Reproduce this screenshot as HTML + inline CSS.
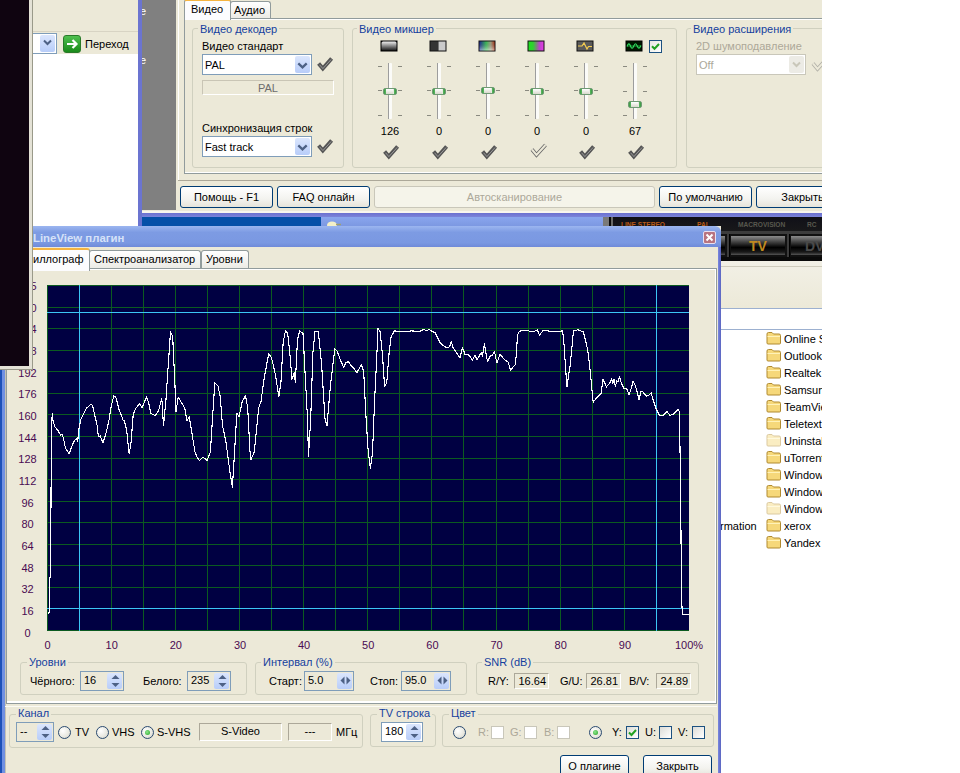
<!DOCTYPE html><html><head><meta charset="utf-8"><style>
*{margin:0;padding:0;box-sizing:border-box}
html,body{width:960px;height:773px;overflow:hidden;background:#fff}
body{position:relative;font-family:"Liberation Sans",sans-serif;font-size:11px;color:#000}
.a{position:absolute}
.t{position:absolute;white-space:nowrap;line-height:13px;font-size:11px}
.gb{position:absolute;border:1px solid #d0d0bf;border-radius:3px}
.gl{position:absolute;white-space:nowrap;line-height:13px;color:#153f9e;background:#ece9d8;padding:0 2px}
.btn{position:absolute;border:1px solid #003c74;border-radius:3px;background:linear-gradient(#fff,#f3f3ef 60%,#e6e4da);text-align:center;line-height:21px;white-space:nowrap}
.cmb{position:absolute;border:1px solid #7f9db9;background:#fff}
.dd{position:absolute;top:1px;right:1px;bottom:1px;width:15px;border-radius:2px;background:linear-gradient(#dbe6fd,#b8cdf9)}

.ylab{position:absolute;width:30px;text-align:center;line-height:13px;color:#4a0a52;font-size:11px}
.xlab{position:absolute;width:40px;text-align:center;line-height:13px;color:#4a0a52;font-size:11px}
.fold{position:absolute;width:16px;height:13px}
</style></head><body>
<div class="a" style="left:33px;top:0;width:105px;height:31px;background:#ece9d8"></div>
<div class="a" style="left:33px;top:31px;width:105px;height:1px;background:#d8d4c4"></div>
<div class="a" style="left:33px;top:32px;width:105px;height:22px;background:#ece9d8"></div>
<div class="a" style="left:33px;top:54px;width:105px;height:172px;background:#fff"></div>
<div class="a" style="left:33px;top:33px;width:24px;height:21px;border:1px solid #7f9db9;border-left:none;background:#fff"></div>
<div class="a" style="left:40px;top:35px;width:15px;height:17px;border-radius:2px;background:linear-gradient(#dbe6fd,#b8cdf9)"></div>
<svg class="a" style="left:43px;top:39px" width="9" height="7"><path d="M1 1.5 L4.5 5 L8 1.5" stroke="#4d6185" stroke-width="2" fill="none"/></svg>
<div class="a" style="left:63px;top:35px;width:18px;height:18px;border-radius:3px;background:linear-gradient(#4fc04f,#1a8a1a);border:1px solid #2a7a2a"></div>
<svg class="a" style="left:65px;top:37px" width="14" height="14"><path d="M2 7 H11 M7.5 3 L11.5 7 L7.5 11" stroke="#fff" stroke-width="2.2" fill="none"/></svg>
<div class="t" style="left:85px;top:38px">Переход</div>
<div class="a" style="left:0;top:0;width:822px;height:217px;overflow:hidden">
<div class="a" style="left:138px;top:0;width:4px;height:226px;background:#6b74d0"></div>
<div class="a" style="left:142px;top:0;width:34px;height:210px;background:#808080"></div>
<div class="a" style="left:142px;top:0;width:20px;height:80px;overflow:hidden"><div class="t" style="left:-2px;top:5px;color:#fff">e</div><div class="t" style="left:-2px;top:54px;color:#fff">e</div></div>
<div class="a" style="left:176px;top:0;width:646px;height:213px;background:#ece9d8"></div>
<div class="a" style="left:142px;top:210px;width:34px;height:3px;background:#ece9d8"></div>
<div class="a" style="left:142px;top:211px;width:680px;height:2px;background:#f8f6ee"></div>
<div class="a" style="left:178px;top:0;width:1px;height:180px;background:#fff"></div>
<div class="a" style="left:178px;top:180px;width:644px;height:1px;background:#aca899"></div>
<div class="a" style="left:142px;top:213px;width:680px;height:4px;background:linear-gradient(#6b70d0,#7b84da)"></div>
<div class="a" style="left:184px;top:18px;width:638px;height:156px;border:1px solid #919b9c;border-right:none;background:#ece9d8"></div>
<div class="a" style="left:185px;top:19px;width:637px;height:1px;background:#fff"></div>
<div class="a" style="left:185px;top:172px;width:637px;height:1px;background:#fff"></div>
<div class="a" style="left:230px;top:1px;width:41px;height:17px;border:1px solid #919b9c;border-bottom:none;border-radius:3px 3px 0 0;background:linear-gradient(#fff,#ecebe5)"></div>
<div class="t" style="left:234px;top:4px">Аудио</div>
<div class="a" style="left:184px;top:-1px;width:47px;height:21px;border:1px solid #919b9c;border-bottom:none;border-radius:3px 3px 0 0;background:#fcfcfe;border-top:2px solid #f5b441"></div>
<div class="t" style="left:191px;top:3px">Видео</div>
<div class="gb" style="left:192px;top:28px;width:152px;height:140px"></div>
<div class="gl" style="left:198px;top:23px">Видео декодер</div>
<div class="t" style="left:202px;top:40px">Видео стандарт</div>
<div class="cmb" style="left:202px;top:54px;width:110px;height:21px"><div class="t" style="left:2px;top:4px">PAL</div><div class="dd"><svg class="a" style="left:2px;top:6px" width="11" height="7"><path d="M1.3 1.3 L5.5 5.3 L9.7 1.3" stroke="#4d6185" stroke-width="2.3" fill="none"/></svg></div></div>
<div class="a" style="left:202px;top:80px;width:132px;height:15px;border:1px solid #c9c5b5;border-right-color:#fff;border-bottom-color:#fff;text-align:center;color:#6d6d6d;line-height:13px;padding-top:1px">PAL</div>
<div class="t" style="left:202px;top:122px">Синхронизация строк</div>
<div class="cmb" style="left:202px;top:136px;width:110px;height:21px"><div class="t" style="left:2px;top:4px">Fast track</div><div class="dd"><svg class="a" style="left:2px;top:6px" width="11" height="7"><path d="M1.3 1.3 L5.5 5.3 L9.7 1.3" stroke="#4d6185" stroke-width="2.3" fill="none"/></svg></div></div>
<div class="gb" style="left:352px;top:28px;width:325px;height:140px"></div>
<div class="gl" style="left:357px;top:23px">Видео микшер</div>
<svg class="a" style="left:0;top:0" width="1" height="1"><defs><linearGradient id="gb" x1="0" y1="0" x2="0" y2="1"><stop offset="0" stop-color="#f0f0f0"/><stop offset="1" stop-color="#1a1a1a"/></linearGradient><linearGradient id="gh" x1="0" y1="0" x2="1" y2="0"><stop offset="0" stop-color="#2030a0"/><stop offset="0.45" stop-color="#40d060"/><stop offset="0.75" stop-color="#b0b090"/><stop offset="1" stop-color="#c04020"/></linearGradient><linearGradient id="gw" x1="0" y1="0" x2="0" y2="1"><stop offset="0" stop-color="#000" stop-opacity="0.1"/><stop offset="1" stop-color="#fff" stop-opacity="0.5"/></linearGradient><linearGradient id="gs" x1="0" y1="0" x2="1" y2="0"><stop offset="0" stop-color="#20e020"/><stop offset="0.3" stop-color="#30d030"/><stop offset="0.55" stop-color="#808080"/><stop offset="0.75" stop-color="#c040d0"/><stop offset="1" stop-color="#e040e0"/></linearGradient></defs></svg>
<svg class="a" style="left:380px;top:40px" width="18" height="12"><rect x="0.5" y="0.5" width="17" height="11" fill="#000"/><rect x="1.5" y="1.5" width="15" height="9" rx="1.5" fill="url(#gb)"/></svg>
<div class="a" style="left:388px;top:63px;width:1px;height:56px;background:#9d9d9d"></div>
<div class="a" style="left:389px;top:63px;width:3px;height:56px;background:#fbfbf8;border-radius:1px"></div>
<div class="a" style="left:378px;top:66px;width:4px;height:1px;background:#8a8a80"></div>
<div class="a" style="left:398px;top:66px;width:4px;height:1px;background:#8a8a80"></div>
<div class="a" style="left:378px;top:90px;width:4px;height:1px;background:#8a8a80"></div>
<div class="a" style="left:398px;top:90px;width:4px;height:1px;background:#8a8a80"></div>
<div class="a" style="left:378px;top:115px;width:4px;height:1px;background:#8a8a80"></div>
<div class="a" style="left:398px;top:115px;width:4px;height:1px;background:#8a8a80"></div>
<div class="a" style="left:383px;top:88px;width:14px;height:7px;border-radius:2px;border:1px solid #6f9a74;background:linear-gradient(90deg,#3a9a40 0,#5cb862 2px,#f4f4ee 3px,#e8e8e0 10px,#5cb862 10px,#3a9a40 12px)"></div>
<div class="a" style="left:386px;top:89px;width:7px;height:5px;background:linear-gradient(#fff,#d8d8cc)"></div>
<div class="t" style="left:370px;top:125px;width:40px;text-align:center">126</div>
<svg class="a" style="left:382px;top:142px" width="20" height="18"><path d="M2.6 9.6 L6.8 14.6 L15.6 4.4" stroke="#555" stroke-width="3.9" fill="none"/><path d="M3.6 10.8 L6.9 14.6 L15.2 5.4" stroke="#a8a8a8" stroke-width="0.8" fill="none"/></svg>
<svg class="a" style="left:429px;top:40px" width="18" height="12"><rect x="0.5" y="0.5" width="17" height="11" fill="#111"/><rect x="1.5" y="1.5" width="8" height="9" fill="#343434"/><rect x="9.5" y="1.5" width="7" height="9" fill="#cacaca"/></svg>
<div class="a" style="left:437px;top:63px;width:1px;height:56px;background:#9d9d9d"></div>
<div class="a" style="left:438px;top:63px;width:3px;height:56px;background:#fbfbf8;border-radius:1px"></div>
<div class="a" style="left:427px;top:66px;width:4px;height:1px;background:#8a8a80"></div>
<div class="a" style="left:447px;top:66px;width:4px;height:1px;background:#8a8a80"></div>
<div class="a" style="left:427px;top:90px;width:4px;height:1px;background:#8a8a80"></div>
<div class="a" style="left:447px;top:90px;width:4px;height:1px;background:#8a8a80"></div>
<div class="a" style="left:427px;top:115px;width:4px;height:1px;background:#8a8a80"></div>
<div class="a" style="left:447px;top:115px;width:4px;height:1px;background:#8a8a80"></div>
<div class="a" style="left:432px;top:88px;width:14px;height:7px;border-radius:2px;border:1px solid #6f9a74;background:linear-gradient(90deg,#3a9a40 0,#5cb862 2px,#f4f4ee 3px,#e8e8e0 10px,#5cb862 10px,#3a9a40 12px)"></div>
<div class="a" style="left:435px;top:89px;width:7px;height:5px;background:linear-gradient(#fff,#d8d8cc)"></div>
<div class="t" style="left:419px;top:125px;width:40px;text-align:center">0</div>
<svg class="a" style="left:431px;top:142px" width="20" height="18"><path d="M2.6 9.6 L6.8 14.6 L15.6 4.4" stroke="#555" stroke-width="3.9" fill="none"/><path d="M3.6 10.8 L6.9 14.6 L15.2 5.4" stroke="#a8a8a8" stroke-width="0.8" fill="none"/></svg>
<svg class="a" style="left:478px;top:40px" width="18" height="12"><rect x="0.5" y="0.5" width="17" height="11" fill="#111"/><rect x="1.5" y="1.5" width="15" height="9" fill="url(#gh)"/><rect x="1.5" y="1.5" width="15" height="9" fill="url(#gw)"/></svg>
<div class="a" style="left:486px;top:63px;width:1px;height:56px;background:#9d9d9d"></div>
<div class="a" style="left:487px;top:63px;width:3px;height:56px;background:#fbfbf8;border-radius:1px"></div>
<div class="a" style="left:476px;top:66px;width:4px;height:1px;background:#8a8a80"></div>
<div class="a" style="left:496px;top:66px;width:4px;height:1px;background:#8a8a80"></div>
<div class="a" style="left:476px;top:90px;width:4px;height:1px;background:#8a8a80"></div>
<div class="a" style="left:496px;top:90px;width:4px;height:1px;background:#8a8a80"></div>
<div class="a" style="left:476px;top:115px;width:4px;height:1px;background:#8a8a80"></div>
<div class="a" style="left:496px;top:115px;width:4px;height:1px;background:#8a8a80"></div>
<div class="a" style="left:481px;top:87px;width:14px;height:7px;border-radius:2px;border:1px solid #6f9a74;background:linear-gradient(90deg,#3a9a40 0,#5cb862 2px,#f4f4ee 3px,#e8e8e0 10px,#5cb862 10px,#3a9a40 12px)"></div>
<div class="a" style="left:484px;top:88px;width:7px;height:5px;background:linear-gradient(#fff,#d8d8cc)"></div>
<div class="t" style="left:468px;top:125px;width:40px;text-align:center">0</div>
<svg class="a" style="left:480px;top:142px" width="20" height="18"><path d="M2.6 9.6 L6.8 14.6 L15.6 4.4" stroke="#555" stroke-width="3.9" fill="none"/><path d="M3.6 10.8 L6.9 14.6 L15.2 5.4" stroke="#a8a8a8" stroke-width="0.8" fill="none"/></svg>
<svg class="a" style="left:527px;top:40px" width="18" height="12"><rect x="0.5" y="0.5" width="17" height="11" fill="#111"/><rect x="1.5" y="1.5" width="15" height="9" fill="url(#gs)"/></svg>
<div class="a" style="left:535px;top:63px;width:1px;height:56px;background:#9d9d9d"></div>
<div class="a" style="left:536px;top:63px;width:3px;height:56px;background:#fbfbf8;border-radius:1px"></div>
<div class="a" style="left:525px;top:66px;width:4px;height:1px;background:#8a8a80"></div>
<div class="a" style="left:545px;top:66px;width:4px;height:1px;background:#8a8a80"></div>
<div class="a" style="left:525px;top:90px;width:4px;height:1px;background:#8a8a80"></div>
<div class="a" style="left:545px;top:90px;width:4px;height:1px;background:#8a8a80"></div>
<div class="a" style="left:525px;top:115px;width:4px;height:1px;background:#8a8a80"></div>
<div class="a" style="left:545px;top:115px;width:4px;height:1px;background:#8a8a80"></div>
<div class="a" style="left:530px;top:88px;width:14px;height:7px;border-radius:2px;border:1px solid #6f9a74;background:linear-gradient(90deg,#3a9a40 0,#5cb862 2px,#f4f4ee 3px,#e8e8e0 10px,#5cb862 10px,#3a9a40 12px)"></div>
<div class="a" style="left:533px;top:89px;width:7px;height:5px;background:linear-gradient(#fff,#d8d8cc)"></div>
<div class="t" style="left:517px;top:125px;width:40px;text-align:center">0</div>
<svg class="a" style="left:529px;top:142px" width="20" height="18"><path d="M3 7.5 L7.5 13 L16.5 3" stroke="#666" stroke-width="3.6" fill="none"/><path d="M3 7.5 L7.5 13 L16.5 3" stroke="#ece9d8" stroke-width="2" fill="none"/></svg>
<svg class="a" style="left:576px;top:40px" width="18" height="12"><rect x="0.5" y="0.5" width="17" height="11" fill="#111"/><rect x="1.5" y="1.5" width="15" height="9" fill="#5a5a5a"/><path d="M2 6 H6 L8 3 L11 9 L12.5 6.5 H16" stroke="#f4cc50" stroke-width="1.2" fill="none"/></svg>
<div class="a" style="left:584px;top:63px;width:1px;height:56px;background:#9d9d9d"></div>
<div class="a" style="left:585px;top:63px;width:3px;height:56px;background:#fbfbf8;border-radius:1px"></div>
<div class="a" style="left:574px;top:66px;width:4px;height:1px;background:#8a8a80"></div>
<div class="a" style="left:594px;top:66px;width:4px;height:1px;background:#8a8a80"></div>
<div class="a" style="left:574px;top:90px;width:4px;height:1px;background:#8a8a80"></div>
<div class="a" style="left:594px;top:90px;width:4px;height:1px;background:#8a8a80"></div>
<div class="a" style="left:574px;top:115px;width:4px;height:1px;background:#8a8a80"></div>
<div class="a" style="left:594px;top:115px;width:4px;height:1px;background:#8a8a80"></div>
<div class="a" style="left:579px;top:88px;width:14px;height:7px;border-radius:2px;border:1px solid #6f9a74;background:linear-gradient(90deg,#3a9a40 0,#5cb862 2px,#f4f4ee 3px,#e8e8e0 10px,#5cb862 10px,#3a9a40 12px)"></div>
<div class="a" style="left:582px;top:89px;width:7px;height:5px;background:linear-gradient(#fff,#d8d8cc)"></div>
<div class="t" style="left:566px;top:125px;width:40px;text-align:center">0</div>
<svg class="a" style="left:578px;top:142px" width="20" height="18"><path d="M2.6 9.6 L6.8 14.6 L15.6 4.4" stroke="#555" stroke-width="3.9" fill="none"/><path d="M3.6 10.8 L6.9 14.6 L15.2 5.4" stroke="#a8a8a8" stroke-width="0.8" fill="none"/></svg>
<svg class="a" style="left:625px;top:40px" width="18" height="12"><rect x="0.5" y="0.5" width="17" height="11" fill="#000"/><rect x="1.5" y="1.5" width="15" height="9" fill="#001800"/><path d="M2 6 H16" stroke="#20a040" stroke-width="0.9"/><path d="M2 6.5 Q3.8 1.5 5.5 6 Q7 10.5 8.8 6 Q10.5 1.5 12.2 6 Q13.8 10.5 16 5.5" stroke="#30e060" stroke-width="1.1" fill="none"/></svg>
<div class="a" style="left:633px;top:63px;width:1px;height:56px;background:#9d9d9d"></div>
<div class="a" style="left:634px;top:63px;width:3px;height:56px;background:#fbfbf8;border-radius:1px"></div>
<div class="a" style="left:623px;top:66px;width:4px;height:1px;background:#8a8a80"></div>
<div class="a" style="left:643px;top:66px;width:4px;height:1px;background:#8a8a80"></div>
<div class="a" style="left:623px;top:91px;width:4px;height:1px;background:#8a8a80"></div>
<div class="a" style="left:643px;top:91px;width:4px;height:1px;background:#8a8a80"></div>
<div class="a" style="left:623px;top:115px;width:4px;height:1px;background:#8a8a80"></div>
<div class="a" style="left:643px;top:115px;width:4px;height:1px;background:#8a8a80"></div>
<div class="a" style="left:628px;top:101px;width:14px;height:7px;border-radius:2px;border:1px solid #6f9a74;background:linear-gradient(90deg,#3a9a40 0,#5cb862 2px,#f4f4ee 3px,#e8e8e0 10px,#5cb862 10px,#3a9a40 12px)"></div>
<div class="a" style="left:631px;top:102px;width:7px;height:5px;background:linear-gradient(#fff,#d8d8cc)"></div>
<div class="t" style="left:615px;top:125px;width:40px;text-align:center">67</div>
<svg class="a" style="left:627px;top:142px" width="20" height="18"><path d="M2.6 9.6 L6.8 14.6 L15.6 4.4" stroke="#555" stroke-width="3.9" fill="none"/><path d="M3.6 10.8 L6.9 14.6 L15.2 5.4" stroke="#a8a8a8" stroke-width="0.8" fill="none"/></svg>
<div class="a" style="left:649px;top:40px;width:13px;height:13px;border:1px solid #1c5180;background:linear-gradient(135deg,#e6e6e0,#fff)"></div>
<svg class="a" style="left:651px;top:42px" width="9" height="9"><path d="M1 4.2 L3.5 6.8 L8 2" stroke="#21a121" stroke-width="2" fill="none"/></svg>
<svg class="a" style="left:316px;top:54px" width="20" height="18"><path d="M2.6 9.6 L6.8 14.6 L15.6 4.4" stroke="#555" stroke-width="3.9" fill="none"/><path d="M3.6 10.8 L6.9 14.6 L15.2 5.4" stroke="#a8a8a8" stroke-width="0.8" fill="none"/></svg>
<svg class="a" style="left:316px;top:136px" width="20" height="18"><path d="M2.6 9.6 L6.8 14.6 L15.6 4.4" stroke="#555" stroke-width="3.9" fill="none"/><path d="M3.6 10.8 L6.9 14.6 L15.2 5.4" stroke="#a8a8a8" stroke-width="0.8" fill="none"/></svg>
<svg class="a" style="left:810px;top:56px" width="20" height="18" opacity="0.5"><path d="M3 7.5 L7.5 13 L16.5 3" stroke="#777" stroke-width="3.6" fill="none"/><path d="M3 7.5 L7.5 13 L16.5 3" stroke="#ece9d8" stroke-width="2" fill="none"/></svg>
<div class="gb" style="left:686px;top:28px;width:150px;height:140px"></div>
<div class="gl" style="left:691px;top:23px">Видео расширения</div>
<div class="t" style="left:696px;top:40px;color:#aca899">2D шумоподавление</div>
<div class="a" style="left:696px;top:54px;width:110px;height:21px;border:1px solid #c9c7ba;background:#fff"><div class="t" style="left:2px;top:4px;color:#aca899">Off</div><div class="a" style="top:1px;right:1px;bottom:1px;width:15px;background:#ecebe5;border-radius:2px"></div><svg class="a" style="right:4px;top:6px" width="9" height="7"><path d="M1 1.5 L4.5 5 L8 1.5" stroke="#c9c7ba" stroke-width="2" fill="none"/></svg></div>
<div class="btn" style="left:180px;top:186px;width:93px;height:22px">Помощь - F1</div>
<div class="btn" style="left:277px;top:186px;width:93px;height:22px">FAQ онлайн</div>
<div class="btn" style="left:374px;top:186px;width:281px;height:22px;border-color:#c9c7ba;background:#f5f4ea;color:#aca899">Автосканирование</div>
<div class="btn" style="left:659px;top:186px;width:93px;height:22px">По умолчанию</div>
<div class="btn" style="left:756px;top:186px;width:93px;height:22px">Закрыть</div>
</div>
<div class="a" style="left:138px;top:0;width:4px;height:226px;background:#6b74d0"></div>
<div class="a" style="left:142px;top:217px;width:179px;height:9px;background:#0650a8"></div>
<div class="a" style="left:321px;top:217px;width:282px;height:9px;background:linear-gradient(#8aa6ee,#7c98e2)"></div>
<svg class="a" style="left:326px;top:220px" width="16" height="6"><ellipse cx="6" cy="5" rx="5" ry="3.5" fill="#f4f0c8"/><path d="M10 4.5 H15" stroke="#a0a070" stroke-width="1.5"/></svg>
<div class="a" style="left:0;top:0;width:822px;height:773px;overflow:hidden">
<div class="a" style="left:603px;top:217px;width:6px;height:44px;background:#7a7a78"></div>
<div class="a" style="left:609px;top:217px;width:213px;height:44px;background:#0a0a0a"></div>
<div class="a" style="left:611px;top:217px;width:2px;height:44px;background:#6a6a68"></div>
<div class="a" style="left:613px;top:217px;width:209px;height:17px;background:linear-gradient(#101018,#1a1a1a)"></div>
<div class="t" style="left:621px;top:220px;font-size:6.6px;line-height:10px;font-weight:bold;color:#b85a18">LINE STEREO</div>
<div class="t" style="left:697px;top:220px;font-size:6.6px;line-height:10px;font-weight:bold;color:#b85a18">PAL</div>
<div class="t" style="left:738px;top:220px;font-size:6.6px;line-height:10px;font-weight:bold;color:#58584e">MACROVISION</div>
<div class="t" style="left:807px;top:220px;font-size:6.6px;line-height:10px;font-weight:bold;color:#58584e">RC</div>
<div class="a" style="left:613px;top:231px;width:209px;height:26px;background:#3c3c3c"></div>
<div class="a" style="left:690px;top:234px;width:37px;height:23px;background:#111;border-left:1px solid #000"></div>
<div class="a" style="left:692px;top:236px;width:33px;height:19px;background:linear-gradient(#8c8c8c,#3a3a3a 35%,#000 60%,#1a1a1a 85%,#555)"></div>
<div class="a" style="left:729px;top:234px;width:58px;height:23px;background:#111;border-left:1px solid #000"></div>
<div class="a" style="left:731px;top:236px;width:54px;height:19px;background:linear-gradient(#8c8c8c,#3a3a3a 35%,#000 60%,#1a1a1a 85%,#555)"></div>
<div class="a" style="left:789px;top:234px;width:40px;height:23px;background:#111;border-left:1px solid #000"></div>
<div class="a" style="left:791px;top:236px;width:36px;height:19px;background:linear-gradient(#8c8c8c,#3a3a3a 35%,#000 60%,#1a1a1a 85%,#555)"></div>
<div class="t" style="left:749px;top:239px;font-size:14px;line-height:15px;font-weight:bold;color:#c08a20">TV</div>
<div class="t" style="left:805px;top:239px;font-size:14px;line-height:15px;font-weight:bold;color:#4a4a4a">DV</div>
</div>
<div class="a" style="left:721px;top:261px;width:101px;height:512px;background:#fff"></div>
<div class="a" style="left:721px;top:261px;width:101px;height:47px;background:linear-gradient(#f2f0e6,#ece9d8)"></div>
<div class="a" style="left:721px;top:266px;width:101px;height:1px;background:#cfccbd"></div>
<div class="a" style="left:721px;top:308px;width:101px;height:1px;background:#9cb0d0"></div>
<div class="a" style="left:721px;top:329px;width:101px;height:1px;background:#9cb0d0"></div>
<svg class="a" style="left:766px;top:331px;opacity:1" width="16" height="14"><path d="M1 3 Q1 1.5 2.5 1.5 H6 L7.5 3 H13 Q14.5 3 14.5 4.5 V12 Q14.5 13 13.5 13 H2 Q1 13 1 12 Z" fill="#f6d87a" stroke="#b08a30" stroke-width="1"/><path d="M1.5 5.5 H14" stroke="#fff2b8" stroke-width="1"/></svg>
<div class="a" style="left:784px;top:333px;width:38px;overflow:hidden;white-space:nowrap;line-height:13px">Online S</div>
<svg class="a" style="left:766px;top:348px;opacity:1" width="16" height="14"><path d="M1 3 Q1 1.5 2.5 1.5 H6 L7.5 3 H13 Q14.5 3 14.5 4.5 V12 Q14.5 13 13.5 13 H2 Q1 13 1 12 Z" fill="#f6d87a" stroke="#b08a30" stroke-width="1"/><path d="M1.5 5.5 H14" stroke="#fff2b8" stroke-width="1"/></svg>
<div class="a" style="left:784px;top:350px;width:38px;overflow:hidden;white-space:nowrap;line-height:13px">Outlook</div>
<svg class="a" style="left:766px;top:365px;opacity:1" width="16" height="14"><path d="M1 3 Q1 1.5 2.5 1.5 H6 L7.5 3 H13 Q14.5 3 14.5 4.5 V12 Q14.5 13 13.5 13 H2 Q1 13 1 12 Z" fill="#f6d87a" stroke="#b08a30" stroke-width="1"/><path d="M1.5 5.5 H14" stroke="#fff2b8" stroke-width="1"/></svg>
<div class="a" style="left:784px;top:367px;width:38px;overflow:hidden;white-space:nowrap;line-height:13px">Realtek</div>
<svg class="a" style="left:766px;top:382px;opacity:1" width="16" height="14"><path d="M1 3 Q1 1.5 2.5 1.5 H6 L7.5 3 H13 Q14.5 3 14.5 4.5 V12 Q14.5 13 13.5 13 H2 Q1 13 1 12 Z" fill="#f6d87a" stroke="#b08a30" stroke-width="1"/><path d="M1.5 5.5 H14" stroke="#fff2b8" stroke-width="1"/></svg>
<div class="a" style="left:784px;top:384px;width:38px;overflow:hidden;white-space:nowrap;line-height:13px">Samsung</div>
<svg class="a" style="left:766px;top:399px;opacity:1" width="16" height="14"><path d="M1 3 Q1 1.5 2.5 1.5 H6 L7.5 3 H13 Q14.5 3 14.5 4.5 V12 Q14.5 13 13.5 13 H2 Q1 13 1 12 Z" fill="#f6d87a" stroke="#b08a30" stroke-width="1"/><path d="M1.5 5.5 H14" stroke="#fff2b8" stroke-width="1"/></svg>
<div class="a" style="left:784px;top:401px;width:38px;overflow:hidden;white-space:nowrap;line-height:13px">TeamViewer</div>
<svg class="a" style="left:766px;top:416px;opacity:1" width="16" height="14"><path d="M1 3 Q1 1.5 2.5 1.5 H6 L7.5 3 H13 Q14.5 3 14.5 4.5 V12 Q14.5 13 13.5 13 H2 Q1 13 1 12 Z" fill="#f6d87a" stroke="#b08a30" stroke-width="1"/><path d="M1.5 5.5 H14" stroke="#fff2b8" stroke-width="1"/></svg>
<div class="a" style="left:784px;top:418px;width:38px;overflow:hidden;white-space:nowrap;line-height:13px">Teletext</div>
<svg class="a" style="left:766px;top:433px;opacity:0.45" width="16" height="14"><path d="M1 3 Q1 1.5 2.5 1.5 H6 L7.5 3 H13 Q14.5 3 14.5 4.5 V12 Q14.5 13 13.5 13 H2 Q1 13 1 12 Z" fill="#f6d87a" stroke="#b08a30" stroke-width="1"/><path d="M1.5 5.5 H14" stroke="#fff2b8" stroke-width="1"/></svg>
<div class="a" style="left:784px;top:435px;width:38px;overflow:hidden;white-space:nowrap;line-height:13px">Uninstall</div>
<svg class="a" style="left:766px;top:450px;opacity:1" width="16" height="14"><path d="M1 3 Q1 1.5 2.5 1.5 H6 L7.5 3 H13 Q14.5 3 14.5 4.5 V12 Q14.5 13 13.5 13 H2 Q1 13 1 12 Z" fill="#f6d87a" stroke="#b08a30" stroke-width="1"/><path d="M1.5 5.5 H14" stroke="#fff2b8" stroke-width="1"/></svg>
<div class="a" style="left:784px;top:452px;width:38px;overflow:hidden;white-space:nowrap;line-height:13px">uTorrent</div>
<svg class="a" style="left:766px;top:467px;opacity:1" width="16" height="14"><path d="M1 3 Q1 1.5 2.5 1.5 H6 L7.5 3 H13 Q14.5 3 14.5 4.5 V12 Q14.5 13 13.5 13 H2 Q1 13 1 12 Z" fill="#f6d87a" stroke="#b08a30" stroke-width="1"/><path d="M1.5 5.5 H14" stroke="#fff2b8" stroke-width="1"/></svg>
<div class="a" style="left:784px;top:469px;width:38px;overflow:hidden;white-space:nowrap;line-height:13px">Windows</div>
<svg class="a" style="left:766px;top:484px;opacity:1" width="16" height="14"><path d="M1 3 Q1 1.5 2.5 1.5 H6 L7.5 3 H13 Q14.5 3 14.5 4.5 V12 Q14.5 13 13.5 13 H2 Q1 13 1 12 Z" fill="#f6d87a" stroke="#b08a30" stroke-width="1"/><path d="M1.5 5.5 H14" stroke="#fff2b8" stroke-width="1"/></svg>
<div class="a" style="left:784px;top:486px;width:38px;overflow:hidden;white-space:nowrap;line-height:13px">Windows</div>
<svg class="a" style="left:766px;top:501px;opacity:0.45" width="16" height="14"><path d="M1 3 Q1 1.5 2.5 1.5 H6 L7.5 3 H13 Q14.5 3 14.5 4.5 V12 Q14.5 13 13.5 13 H2 Q1 13 1 12 Z" fill="#f6d87a" stroke="#b08a30" stroke-width="1"/><path d="M1.5 5.5 H14" stroke="#fff2b8" stroke-width="1"/></svg>
<div class="a" style="left:784px;top:503px;width:38px;overflow:hidden;white-space:nowrap;line-height:13px">Windows</div>
<svg class="a" style="left:766px;top:518px;opacity:1" width="16" height="14"><path d="M1 3 Q1 1.5 2.5 1.5 H6 L7.5 3 H13 Q14.5 3 14.5 4.5 V12 Q14.5 13 13.5 13 H2 Q1 13 1 12 Z" fill="#f6d87a" stroke="#b08a30" stroke-width="1"/><path d="M1.5 5.5 H14" stroke="#fff2b8" stroke-width="1"/></svg>
<div class="a" style="left:784px;top:520px;width:38px;overflow:hidden;white-space:nowrap;line-height:13px">xerox</div>
<svg class="a" style="left:766px;top:535px;opacity:1" width="16" height="14"><path d="M1 3 Q1 1.5 2.5 1.5 H6 L7.5 3 H13 Q14.5 3 14.5 4.5 V12 Q14.5 13 13.5 13 H2 Q1 13 1 12 Z" fill="#f6d87a" stroke="#b08a30" stroke-width="1"/><path d="M1.5 5.5 H14" stroke="#fff2b8" stroke-width="1"/></svg>
<div class="a" style="left:784px;top:537px;width:38px;overflow:hidden;white-space:nowrap;line-height:13px">Yandex</div>
<div class="t" style="left:720px;top:520px">rmation</div>
<div class="a" style="left:0;top:226px;width:721px;height:547px;background:#ece9d8;border-left:1px solid #fff"></div>
<div class="a" style="left:0;top:226px;width:721px;height:21px;border-radius:6px 6px 0 0;background:linear-gradient(#9cb6f0,#7d9be3 30%,#7a98e2 80%,#6f8ad8)"></div>
<div class="a" style="left:0;top:247px;width:2px;height:526px;background:#1d50b8"></div><div class="a" style="left:2px;top:247px;width:3px;height:526px;background:#7090e2"></div><div class="a" style="left:5px;top:247px;width:1px;height:526px;background:#c4c1b4"></div>
<div class="a" style="left:718px;top:247px;width:3px;height:526px;background:linear-gradient(90deg,#7a88e0,#5a64c0)"></div>
<div class="t" style="left:33px;top:231px;font-weight:bold;font-size:11.4px;line-height:15px;color:#d6e2f8">LineView плагин</div>
<div class="a" style="left:703px;top:231px;width:13px;height:13px;border:1px solid #e8e0f0;border-radius:2px;background:#b87480"></div>
<svg class="a" style="left:705px;top:233px" width="9" height="9"><path d="M1.5 1.5 L7.5 7.5 M7.5 1.5 L1.5 7.5" stroke="#fff" stroke-width="2"/></svg>
<div class="a" style="left:6px;top:268px;width:711px;height:436px;border:1px solid #919b9c;background:#ece9d8"></div>
<div class="a" style="left:7px;top:269px;width:709px;height:1px;background:#fff"></div>
<div class="a" style="left:715px;top:269px;width:1px;height:434px;background:#fff"></div>
<div class="a" style="left:7px;top:701px;width:709px;height:2px;background:#fff"></div><div class="a" style="left:5px;top:706px;width:712px;height:1px;background:#fbfaf4"></div>
<div class="a" style="left:89px;top:250px;width:112px;height:18px;border:1px solid #919b9c;border-bottom:none;border-radius:3px 3px 0 0;background:linear-gradient(#fff,#ecebe5)"></div>
<div class="t" style="left:94px;top:253px">Спектроанализатор</div>
<div class="a" style="left:201px;top:250px;width:48px;height:18px;border:1px solid #919b9c;border-bottom:none;border-radius:3px 3px 0 0;background:linear-gradient(#fff,#ecebe5)"></div>
<div class="t" style="left:206px;top:253px">Уровни</div>
<div class="a" style="left:6px;top:248px;width:84px;height:23px;border:1px solid #919b9c;border-bottom:none;border-radius:3px 3px 0 0;background:#fcfcfe;border-top:2px solid #f5b441"></div>
<div class="t" style="left:33px;top:253px">иллограф</div>
<div class="a" style="left:47px;top:285px;width:642px;height:346px;background:#000042"></div>
<svg class="a" style="left:0;top:0" width="960" height="773" shape-rendering="crispEdges"><rect x="47" y="630" width="642" height="1" fill="#0b5a20"/><rect x="47" y="608" width="642" height="1" fill="#0b5a20"/><rect x="47" y="587" width="642" height="1" fill="#0b5a20"/><rect x="47" y="565" width="642" height="1" fill="#0b5a20"/><rect x="47" y="544" width="642" height="1" fill="#0b5a20"/><rect x="47" y="522" width="642" height="1" fill="#0b5a20"/><rect x="47" y="501" width="642" height="1" fill="#0b5a20"/><rect x="47" y="479" width="642" height="1" fill="#0b5a20"/><rect x="47" y="458" width="642" height="1" fill="#0b5a20"/><rect x="47" y="436" width="642" height="1" fill="#0b5a20"/><rect x="47" y="414" width="642" height="1" fill="#0b5a20"/><rect x="47" y="393" width="642" height="1" fill="#0b5a20"/><rect x="47" y="371" width="642" height="1" fill="#0b5a20"/><rect x="47" y="350" width="642" height="1" fill="#0b5a20"/><rect x="47" y="328" width="642" height="1" fill="#0b5a20"/><rect x="47" y="307" width="642" height="1" fill="#0b5a20"/><rect x="47" y="285" width="642" height="1" fill="#0b5a20"/><rect x="47" y="285" width="1" height="346" fill="#0b5a20"/><rect x="79" y="285" width="1" height="346" fill="#0b5a20"/><rect x="111" y="285" width="1" height="346" fill="#0b5a20"/><rect x="143" y="285" width="1" height="346" fill="#0b5a20"/><rect x="175" y="285" width="1" height="346" fill="#0b5a20"/><rect x="207" y="285" width="1" height="346" fill="#0b5a20"/><rect x="239" y="285" width="1" height="346" fill="#0b5a20"/><rect x="271" y="285" width="1" height="346" fill="#0b5a20"/><rect x="303" y="285" width="1" height="346" fill="#0b5a20"/><rect x="335" y="285" width="1" height="346" fill="#0b5a20"/><rect x="367" y="285" width="1" height="346" fill="#0b5a20"/><rect x="399" y="285" width="1" height="346" fill="#0b5a20"/><rect x="431" y="285" width="1" height="346" fill="#0b5a20"/><rect x="463" y="285" width="1" height="346" fill="#0b5a20"/><rect x="496" y="285" width="1" height="346" fill="#0b5a20"/><rect x="528" y="285" width="1" height="346" fill="#0b5a20"/><rect x="560" y="285" width="1" height="346" fill="#0b5a20"/><rect x="592" y="285" width="1" height="346" fill="#0b5a20"/><rect x="624" y="285" width="1" height="346" fill="#0b5a20"/><rect x="656" y="285" width="1" height="346" fill="#0b5a20"/><rect x="47" y="312" width="642" height="1" fill="#3cc6f4"/><rect x="47" y="608" width="642" height="1" fill="#3cc6f4"/><rect x="79" y="285" width="1" height="346" fill="#3cc6f4"/><rect x="656" y="285" width="1" height="346" fill="#3cc6f4"/></svg>
<svg class="a" style="left:0;top:0" width="960" height="773"><polyline points="47.7,614.3 49.3,612.0 49.3,578.0 50.6,577.7 51.4,423.0 52.4,413.3 53.0,421.0 55.0,427.0 57.6,430.0 60.8,435.3 62.0,434.0 63.4,438.0 65.4,448.0 67.3,450.8 69.2,454.0 72.5,444.4 75.0,440.0 77.0,438.5 77.7,441.0 79.0,428.8 80.9,419.0 84.0,413.0 86.7,408.0 91.2,404.0 92.5,405.5 94.5,414.0 97.0,425.0 98.4,436.6 100.3,436.0 102.9,443.0 105.5,435.0 108.7,422.0 111.3,405.5 113.9,395.8 115.8,397.0 119.0,409.4 123.0,419.8 124.4,421.0 126.6,430.0 129.2,454.0 131.0,443.0 133.2,414.5 135.4,409.0 139.8,403.5 142.0,408.0 146.4,397.0 148.6,402.4 150.8,413.4 155.2,415.6 158.5,411.0 161.8,398.0 163.5,425.5 166.0,399.0 167.3,379.0 170.5,332.0 172.7,336.5 175.0,386.0 176.0,412.0 178.2,397.0 182.6,404.6 184.8,408.0 187.0,421.0 189.2,416.7 195.0,451.9 197.2,457.4 199.4,460.7 202.7,457.4 204.9,458.5 207.1,460.7 210.4,451.9 212.6,416.7 214.8,382.6 218.0,386.0 220.3,397.0 222.5,425.5 225.8,440.9 230.2,473.8 232.4,487.0 233.5,469.5 236.8,413.4 239.0,416.7 242.3,401.3 245.5,395.8 247.7,407.9 250.0,451.9 251.0,459.6 254.3,451.9 258.7,407.9 261.0,401.3 264.2,378.2 268.6,354.0 270.8,356.3 272.2,360.7 275.5,375.0 278.8,397.0 281.0,381.5 283.2,342.0 285.4,331.0 287.6,333.2 289.8,353.0 292.0,379.3 294.2,372.7 295.3,382.6 297.5,339.8 299.7,331.0 303.0,333.2 305.2,375.0 307.4,416.7 308.5,456.3 310.7,418.9 312.9,353.0 315.0,331.0 318.4,332.0 321.6,364.0 325.0,419.0 327.0,425.5 330.4,386.0 334.8,348.6 337.0,350.8 340.3,359.6 343.6,367.3 345.8,362.9 348.3,361.6 350.5,365.0 352.7,367.0 357.0,372.6 359.3,368.2 361.5,365.0 363.7,371.5 365.9,415.5 368.0,448.5 370.3,468.2 372.5,452.9 374.7,398.0 376.9,354.0 378.0,328.7 380.2,332.0 382.4,354.0 384.6,386.9 386.8,382.5 389.0,354.0 391.2,336.4 394.5,330.9 402.0,332.0 411.0,330.9 420.0,331.3 423.8,329.4 426.3,330.6 429.4,329.4 431.9,331.3 435.0,332.5 440.0,342.5 442.5,345.0 446.9,348.0 449.4,346.9 451.3,341.9 453.1,347.5 456.3,352.5 460.0,358.0 462.5,347.5 465.0,354.4 468.8,355.0 472.5,360.0 475.0,355.0 476.9,360.0 481.3,352.5 482.5,356.0 484.4,343.8 487.5,361.9 490.0,356.3 492.5,355.0 494.4,351.3 496.9,363.0 500.0,354.4 505.0,360.0 508.1,361.9 510.6,370.6 512.5,367.5 515.0,365.0 516.3,355.0 517.5,335.0 519.4,331.3 525.0,330.0 532.5,331.9 537.5,330.0 539.4,335.3 542.7,330.9 548.2,330.9 554.8,332.0 562.5,330.9 563.6,338.6 566.9,387.0 570.2,365.0 573.5,330.9 577.9,329.8 583.4,332.0 587.7,349.6 590.0,369.3 593.2,402.3 596.5,398.0 601.0,393.5 603.1,379.2 606.4,387.0 610.0,382.6 611.8,379.0 612.7,384.0 614.0,379.0 615.4,386.3 616.8,380.8 618.2,381.7 619.5,376.3 620.9,381.7 623.6,388.0 626.8,389.0 629.0,394.9 631.3,388.0 633.1,381.3 634.5,383.6 636.7,389.9 639.0,399.9 640.8,391.7 642.6,391.7 646.2,396.2 649.0,394.9 651.2,392.6 652.6,398.0 656.2,408.9 659.4,415.3 663.0,415.7 667.0,411.6 669.8,415.3 673.4,414.3 677.9,409.4 679.7,411.6 679.9,440.0 680.9,520.0 681.4,594.0 682.3,613.0 682.5,614.0 689.0,614.5" fill="none" stroke="#fff" stroke-width="1.1" stroke-linejoin="round" shape-rendering="crispEdges"/></svg>
<div class="ylab" style="left:12.5px;top:627px">0</div>
<div class="ylab" style="left:12.5px;top:605px">16</div>
<div class="ylab" style="left:12.5px;top:583px">32</div>
<div class="ylab" style="left:12.5px;top:562px">48</div>
<div class="ylab" style="left:12.5px;top:540px">64</div>
<div class="ylab" style="left:12.5px;top:518px">80</div>
<div class="ylab" style="left:12.5px;top:497px">96</div>
<div class="ylab" style="left:12.5px;top:475px">112</div>
<div class="ylab" style="left:12.5px;top:453px">128</div>
<div class="ylab" style="left:12.5px;top:432px">144</div>
<div class="ylab" style="left:12.5px;top:410px">160</div>
<div class="ylab" style="left:12.5px;top:388px">176</div>
<div class="ylab" style="left:12.5px;top:367px">192</div>
<div class="ylab" style="left:12.5px;top:345px">208</div>
<div class="ylab" style="left:12.5px;top:323px">224</div>
<div class="ylab" style="left:12.5px;top:302px">240</div>
<div class="ylab" style="left:12.5px;top:280px">255</div>
<div class="xlab" style="left:27.5px;top:639px">0</div>
<div class="xlab" style="left:91.7px;top:639px">10</div>
<div class="xlab" style="left:155.8px;top:639px">20</div>
<div class="xlab" style="left:220.0px;top:639px">30</div>
<div class="xlab" style="left:284.1px;top:639px">40</div>
<div class="xlab" style="left:348.2px;top:639px">50</div>
<div class="xlab" style="left:412.4px;top:639px">60</div>
<div class="xlab" style="left:476.6px;top:639px">70</div>
<div class="xlab" style="left:540.7px;top:639px">80</div>
<div class="xlab" style="left:604.9px;top:639px">90</div>
<div class="xlab" style="left:669.0px;top:639px">100%</div>
<div class="gb" style="left:20px;top:662px;width:227px;height:33px"></div>
<div class="gl" style="left:27px;top:656px">Уровни</div>
<div class="t" style="left:30px;top:675px">Чёрного:</div>
<div class="t" style="left:143px;top:675px">Белого:</div>
<div class="a" style="left:80px;top:671px;width:44px;height:20px;border:1px solid #7f9db9;background:#ece9d8"><div class="t" style="left:3px;top:2px">16</div><div class="a" style="right:1px;top:1px;bottom:1px;width:15px;border-radius:2px;background:linear-gradient(#dbe6fd,#b8cdf9)"></div></div><svg class="a" style="left:108px;top:673px" width="15" height="16"><path d="M3.5 6.0 L7.5 2.0 L11.5 6.0 Z M3.5 10.0 L7.5 14.0 L11.5 10.0 Z" fill="#4d6185"/></svg>
<div class="a" style="left:187px;top:671px;width:44px;height:20px;border:1px solid #7f9db9;background:#ece9d8"><div class="t" style="left:3px;top:2px">235</div><div class="a" style="right:1px;top:1px;bottom:1px;width:15px;border-radius:2px;background:linear-gradient(#dbe6fd,#b8cdf9)"></div></div><svg class="a" style="left:215px;top:673px" width="15" height="16"><path d="M3.5 6.0 L7.5 2.0 L11.5 6.0 Z M3.5 10.0 L7.5 14.0 L11.5 10.0 Z" fill="#4d6185"/></svg>
<div class="gb" style="left:255px;top:662px;width:212px;height:33px"></div>
<div class="gl" style="left:261px;top:656px">Интервал (%)</div>
<div class="t" style="left:269px;top:675px">Старт:</div>
<div class="a" style="left:304px;top:671px;width:50px;height:20px;border:1px solid #7f9db9;background:#ece9d8"><div class="t" style="left:3px;top:2px">5.0</div><div class="a" style="right:1px;top:1px;bottom:1px;width:15px;border-radius:2px;background:linear-gradient(#dbe6fd,#b8cdf9)"></div></div><svg class="a" style="left:338px;top:676px" width="15" height="9"><path d="M6.5 0.5 L2.5 4.5 L6.5 8.5 Z M8.5 0.5 L12.5 4.5 L8.5 8.5 Z" fill="#4d6185"/></svg>
<div class="t" style="left:370px;top:675px">Стоп:</div>
<div class="a" style="left:401px;top:671px;width:50px;height:20px;border:1px solid #7f9db9;background:#ece9d8"><div class="t" style="left:3px;top:2px">95.0</div><div class="a" style="right:1px;top:1px;bottom:1px;width:15px;border-radius:2px;background:linear-gradient(#dbe6fd,#b8cdf9)"></div></div><svg class="a" style="left:435px;top:676px" width="15" height="9"><path d="M6.5 0.5 L2.5 4.5 L6.5 8.5 Z M8.5 0.5 L12.5 4.5 L8.5 8.5 Z" fill="#4d6185"/></svg>
<div class="gb" style="left:476px;top:662px;width:223px;height:33px"></div>
<div class="gl" style="left:482px;top:656px">SNR (dB)</div>
<div class="t" style="left:488px;top:675px">R/Y:</div>
<div class="a" style="left:514px;top:673px;width:35px;height:16px;border:1px solid #aca899;border-right-color:#fff;border-bottom-color:#fff;text-align:right;padding-right:2px;padding-top:1px;line-height:13px">16.64</div>
<div class="t" style="left:560px;top:675px">G/U:</div>
<div class="a" style="left:586px;top:673px;width:35px;height:16px;border:1px solid #aca899;border-right-color:#fff;border-bottom-color:#fff;text-align:right;padding-right:2px;padding-top:1px;line-height:13px">26.81</div>
<div class="t" style="left:629px;top:675px">B/V:</div>
<div class="a" style="left:656px;top:673px;width:35px;height:16px;border:1px solid #aca899;border-right-color:#fff;border-bottom-color:#fff;text-align:right;padding-right:2px;padding-top:1px;line-height:13px">24.89</div>
<div class="gb" style="left:9px;top:714px;width:354px;height:34px"></div>
<div class="gl" style="left:16px;top:707px">Канал</div>
<div class="a" style="left:16px;top:722px;width:38px;height:20px;border:1px solid #7f9db9;background:#ece9d8"><div class="t" style="left:3px;top:2px">--</div><div class="a" style="right:1px;top:1px;bottom:1px;width:15px;border-radius:2px;background:linear-gradient(#dbe6fd,#b8cdf9)"></div></div><svg class="a" style="left:38px;top:724px" width="15" height="16"><path d="M3.5 6.0 L7.5 2.0 L11.5 6.0 Z M3.5 10.0 L7.5 14.0 L11.5 10.0 Z" fill="#4d6185"/></svg>
<div class="a" style="left:58px;top:726px;width:13px;height:13px;border-radius:50%;border:1.3px solid #2a4a70;background:radial-gradient(circle at 35% 35%,#fff,#e8e8e0 60%,#c8c8c0)"></div>
<div class="t" style="left:75px;top:726px">TV</div>
<div class="a" style="left:96px;top:726px;width:13px;height:13px;border-radius:50%;border:1.3px solid #2a4a70;background:radial-gradient(circle at 35% 35%,#fff,#e8e8e0 60%,#c8c8c0)"></div>
<div class="t" style="left:112px;top:726px">VHS</div>
<div class="a" style="left:141px;top:726px;width:13px;height:13px;border-radius:50%;border:1.3px solid #2a4a70;background:radial-gradient(circle at 35% 35%,#fff,#e8e8e0 60%,#c8c8c0)"></div><div class="a" style="left:145px;top:730px;width:5px;height:5px;border-radius:50%;background:radial-gradient(circle at 40% 40%,#8ee88e,#21a121)"></div>
<div class="t" style="left:157px;top:726px">S-VHS</div>
<div class="a" style="left:199px;top:723px;width:83px;height:18px;border:1px solid #aca899;border-right-color:#fff;border-bottom-color:#fff;text-align:center;line-height:15px">S-Video</div>
<div class="a" style="left:288px;top:723px;width:44px;height:18px;border:1px solid #aca899;border-right-color:#fff;border-bottom-color:#fff;text-align:center;line-height:15px">---</div>
<div class="t" style="left:336px;top:726px">МГц</div>
<div class="gb" style="left:370px;top:714px;width:66px;height:33px"></div>
<div class="gl" style="left:377px;top:707px">TV строка</div>
<div class="a" style="left:381px;top:722px;width:42px;height:20px;border:1px solid #7f9db9;background:#fff"><div class="t" style="left:3px;top:2px">180</div><div class="a" style="right:1px;top:1px;bottom:1px;width:15px;border-radius:2px;background:linear-gradient(#dbe6fd,#b8cdf9)"></div></div><svg class="a" style="left:407px;top:724px" width="15" height="16"><path d="M3.5 6.0 L7.5 2.0 L11.5 6.0 Z M3.5 10.0 L7.5 14.0 L11.5 10.0 Z" fill="#4d6185"/></svg>
<div class="gb" style="left:442px;top:714px;width:272px;height:33px"></div>
<div class="gl" style="left:449px;top:707px">Цвет</div>
<div class="a" style="left:453px;top:726px;width:13px;height:13px;border-radius:50%;border:1.3px solid #2a4a70;background:radial-gradient(circle at 35% 35%,#fff,#e8e8e0 60%,#c8c8c0)"></div>
<div class="t" style="left:478px;top:726px;color:#aca899">R:</div>
<div class="a" style="left:491px;top:726px;width:13px;height:13px;border:1px solid #c9c7ba;background:#fff"></div>
<div class="t" style="left:510px;top:726px;color:#aca899">G:</div>
<div class="a" style="left:524px;top:726px;width:13px;height:13px;border:1px solid #c9c7ba;background:#fff"></div>
<div class="t" style="left:544px;top:726px;color:#aca899">B:</div>
<div class="a" style="left:557px;top:726px;width:13px;height:13px;border:1px solid #c9c7ba;background:#fff"></div>
<div class="a" style="left:589px;top:726px;width:13px;height:13px;border-radius:50%;border:1.3px solid #2a4a70;background:radial-gradient(circle at 35% 35%,#fff,#e8e8e0 60%,#c8c8c0)"></div><div class="a" style="left:593px;top:730px;width:5px;height:5px;border-radius:50%;background:radial-gradient(circle at 40% 40%,#8ee88e,#21a121)"></div>
<div class="t" style="left:612px;top:726px">Y:</div>
<div class="a" style="left:626px;top:726px;width:13px;height:13px;border:1px solid #1c5180;background:linear-gradient(135deg,#dcdcd7,#fff)"></div><svg class="a" style="left:628px;top:728px" width="9" height="9"><path d="M1 4.5 L3.5 7 L8 2" stroke="#21a121" stroke-width="2" fill="none"/></svg>
<div class="t" style="left:645px;top:726px">U:</div>
<div class="a" style="left:659px;top:726px;width:13px;height:13px;border:1px solid #1c5180;background:linear-gradient(135deg,#dcdcd7,#fff)"></div>
<div class="t" style="left:678px;top:726px">V:</div>
<div class="a" style="left:692px;top:726px;width:13px;height:13px;border:1px solid #1c5180;background:linear-gradient(135deg,#dcdcd7,#fff)"></div>
<div class="btn" style="left:560px;top:755px;width:69px;height:22px">О плагине</div>
<div class="btn" style="left:643px;top:755px;width:69px;height:22px">Закрыть</div>
<div class="a" style="left:0;top:0;width:33px;height:370px;background:#e4e2d6;border-right:1px solid #9a9a8a;border-bottom:1px solid #9a9a8a"></div>
<div class="a" style="left:0;top:0;width:29px;height:366px;background:#0f0410"></div>
</body></html>
